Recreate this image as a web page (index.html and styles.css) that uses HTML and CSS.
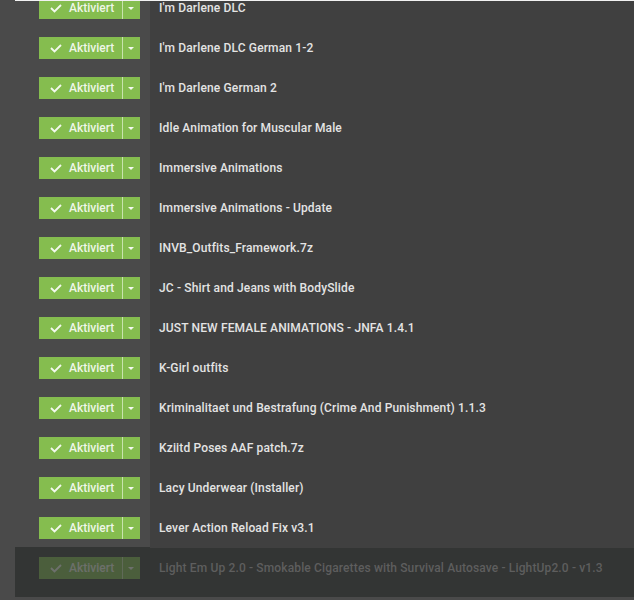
FILE: index.html
```html
<!DOCTYPE html>
<html lang="de">
<head>
    <meta charset="UTF-8">
    <title>Mods</title>
    <link rel="stylesheet" href="styles.css">
</head>
<body>
    <div class="mod-view">
        <div class="mod-list">
            <div class="mod-row">
                <div class="mod-state"><div class="state-btn"><span class="state-main"><svg class="check" width="12" height="9" viewBox="0 0 12 9"><polyline points="1,4 4.5,7.5 11,1" /></svg>Aktiviert</span><span class="state-caret"></span></div></div>
                <div class="mod-name">I'm Darlene DLC</div>
            </div>
            <div class="mod-row">
                <div class="mod-state"><div class="state-btn"><span class="state-main"><svg class="check" width="12" height="9" viewBox="0 0 12 9"><polyline points="1,4 4.5,7.5 11,1" /></svg>Aktiviert</span><span class="state-caret"></span></div></div>
                <div class="mod-name">I'm Darlene DLC German 1-2</div>
            </div>
            <div class="mod-row">
                <div class="mod-state"><div class="state-btn"><span class="state-main"><svg class="check" width="12" height="9" viewBox="0 0 12 9"><polyline points="1,4 4.5,7.5 11,1" /></svg>Aktiviert</span><span class="state-caret"></span></div></div>
                <div class="mod-name">I'm Darlene German 2</div>
            </div>
            <div class="mod-row">
                <div class="mod-state"><div class="state-btn"><span class="state-main"><svg class="check" width="12" height="9" viewBox="0 0 12 9"><polyline points="1,4 4.5,7.5 11,1" /></svg>Aktiviert</span><span class="state-caret"></span></div></div>
                <div class="mod-name">Idle Animation for Muscular Male</div>
            </div>
            <div class="mod-row">
                <div class="mod-state"><div class="state-btn"><span class="state-main"><svg class="check" width="12" height="9" viewBox="0 0 12 9"><polyline points="1,4 4.5,7.5 11,1" /></svg>Aktiviert</span><span class="state-caret"></span></div></div>
                <div class="mod-name">Immersive Animations</div>
            </div>
            <div class="mod-row">
                <div class="mod-state"><div class="state-btn"><span class="state-main"><svg class="check" width="12" height="9" viewBox="0 0 12 9"><polyline points="1,4 4.5,7.5 11,1" /></svg>Aktiviert</span><span class="state-caret"></span></div></div>
                <div class="mod-name">Immersive Animations - Update</div>
            </div>
            <div class="mod-row">
                <div class="mod-state"><div class="state-btn"><span class="state-main"><svg class="check" width="12" height="9" viewBox="0 0 12 9"><polyline points="1,4 4.5,7.5 11,1" /></svg>Aktiviert</span><span class="state-caret"></span></div></div>
                <div class="mod-name">INVB_Outfits_Framework.7z</div>
            </div>
            <div class="mod-row">
                <div class="mod-state"><div class="state-btn"><span class="state-main"><svg class="check" width="12" height="9" viewBox="0 0 12 9"><polyline points="1,4 4.5,7.5 11,1" /></svg>Aktiviert</span><span class="state-caret"></span></div></div>
                <div class="mod-name">JC - Shirt and Jeans with BodySlide</div>
            </div>
            <div class="mod-row">
                <div class="mod-state"><div class="state-btn"><span class="state-main"><svg class="check" width="12" height="9" viewBox="0 0 12 9"><polyline points="1,4 4.5,7.5 11,1" /></svg>Aktiviert</span><span class="state-caret"></span></div></div>
                <div class="mod-name">JUST NEW FEMALE ANIMATIONS - JNFA 1.4.1</div>
            </div>
            <div class="mod-row">
                <div class="mod-state"><div class="state-btn"><span class="state-main"><svg class="check" width="12" height="9" viewBox="0 0 12 9"><polyline points="1,4 4.5,7.5 11,1" /></svg>Aktiviert</span><span class="state-caret"></span></div></div>
                <div class="mod-name">K-Girl outfits</div>
            </div>
            <div class="mod-row">
                <div class="mod-state"><div class="state-btn"><span class="state-main"><svg class="check" width="12" height="9" viewBox="0 0 12 9"><polyline points="1,4 4.5,7.5 11,1" /></svg>Aktiviert</span><span class="state-caret"></span></div></div>
                <div class="mod-name">Kriminalitaet und Bestrafung (Crime And Punishment) 1.1.3</div>
            </div>
            <div class="mod-row">
                <div class="mod-state"><div class="state-btn"><span class="state-main"><svg class="check" width="12" height="9" viewBox="0 0 12 9"><polyline points="1,4 4.5,7.5 11,1" /></svg>Aktiviert</span><span class="state-caret"></span></div></div>
                <div class="mod-name">Kziitd Poses AAF patch.7z</div>
            </div>
            <div class="mod-row">
                <div class="mod-state"><div class="state-btn"><span class="state-main"><svg class="check" width="12" height="9" viewBox="0 0 12 9"><polyline points="1,4 4.5,7.5 11,1" /></svg>Aktiviert</span><span class="state-caret"></span></div></div>
                <div class="mod-name">Lacy Underwear (Installer)</div>
            </div>
            <div class="mod-row">
                <div class="mod-state"><div class="state-btn"><span class="state-main"><svg class="check" width="12" height="9" viewBox="0 0 12 9"><polyline points="1,4 4.5,7.5 11,1" /></svg>Aktiviert</span><span class="state-caret"></span></div></div>
                <div class="mod-name">Lever Action Reload Fix v3.1</div>
            </div>
            <div class="mod-row dragging">
                <div class="mod-state"><div class="state-btn"><span class="state-main"><svg class="check" width="12" height="9" viewBox="0 0 12 9"><polyline points="1,4 4.5,7.5 11,1" /></svg>Aktiviert</span><span class="state-caret"></span></div></div>
                <div class="mod-name">Light Em Up 2.0 - Smokable Cigarettes with Survival Autosave - LightUp2.0 - v1.3</div>
            </div>
        </div>
    </div>
</body>
</html>
```

FILE: styles.css
```css
body {
    margin: 0;
    background: #4a4a4a;
    font-family: Roboto, "Liberation Sans", sans-serif;
    font-size: 12px;
    color: #e4e4e4;
    height: 600px;
    overflow: hidden;
}

.mod-view {
    margin-left: 15px;
    border-top: 1px solid #f2f2f2;
    overflow: hidden;
}

.mod-list {
    margin-top: -13px;
}

.mod-row {
    display: flex;
    height: 40px;
}

.mod-state {
    width: 135px;
    padding-left: 24px;
    box-sizing: border-box;
    display: flex;
    align-items: center;
}

.mod-name {
    flex: 1;
    background: #404040;
    padding-left: 9px;
    display: flex;
    align-items: center;
    font-weight: 500;
    letter-spacing: 0.14px;
    white-space: nowrap;
}

.state-btn {
    display: flex;
    height: 22px;
    background: #85bd4f;
    color: rgba(255, 255, 255, 0.88);
    font-weight: 500;
}

.state-main {
    width: 84px;
    display: flex;
    align-items: center;
    padding-left: 11px;
    box-sizing: border-box;
    border-right: 1px solid #c8e3ad;
}

.check {
    margin-right: 7px;
    fill: none;
    stroke: rgba(255, 255, 255, 0.9);
    stroke-width: 1.8;
}

.state-caret {
    width: 17px;
    position: relative;
}

.state-caret::after {
    content: "";
    position: absolute;
    left: 5px;
    top: 10px;
    border-left: 3.5px solid transparent;
    border-right: 3.5px solid transparent;
    border-top: 3px solid rgba(255, 255, 255, 0.9);
}

.mod-row.dragging {
    height: 50px;
    margin-top: -1px;
    background: #333534;
}

.mod-row.dragging .mod-state,
.mod-row.dragging .mod-name {
    align-items: flex-start;
    padding-top: 10px;
    background: transparent;
}

.mod-row.dragging .mod-name {
    line-height: 22px;
    color: #5e5e5e;
}

.mod-row.dragging .state-btn {
    opacity: 0.3;
}
```
